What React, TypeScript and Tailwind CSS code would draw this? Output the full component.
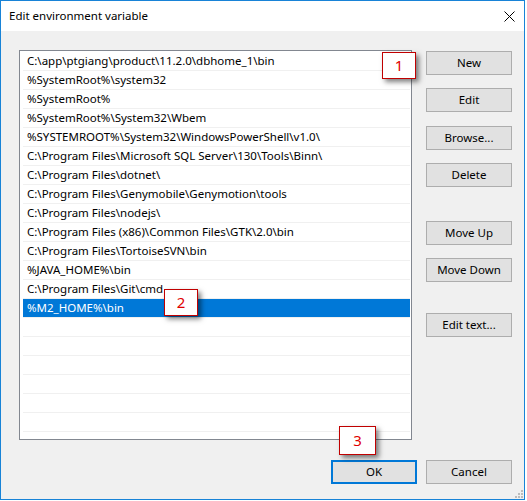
import React from "react";

const rows = [
  "C:\\app\\ptgiang\\product\\11.2.0\\dbhome_1\\bin",
  "%SystemRoot%\\system32",
  "%SystemRoot%",
  "%SystemRoot%\\System32\\Wbem",
  "%SYSTEMROOT%\\System32\\WindowsPowerShell\\v1.0\\",
  "C:\\Program Files\\Microsoft SQL Server\\130\\Tools\\Binn\\",
  "C:\\Program Files\\dotnet\\",
  "C:\\Program Files\\Genymobile\\Genymotion\\tools",
  "C:\\Program Files\\nodejs\\",
  "C:\\Program Files (x86)\\Common Files\\GTK\\2.0\\bin",
  "C:\\Program Files\\TortoiseSVN\\bin",
  "%JAVA_HOME%\\bin",
  "C:\\Program Files\\Git\\cmd",
  "%M2_HOME%\\bin",
  "",
  "",
  "",
  "",
  "",
  "",
  "",
];

function Btn({ label, className = "" }: { label: string; className?: string }) {
  return (
    <div
      className={`w-[86px] h-[24px] bg-[#e1e1e1] border border-[#adadad] flex items-center justify-center text-[11.5px] text-black ${className}`}
    >
      {label}
    </div>
  );
}

function Callout({ n, className }: { n: string; className: string }) {
  return (
    <div
      className={`absolute bg-white border border-[#c00000] flex items-center justify-center text-[15px] text-[#e00000] shadow-[3px_3px_5px_rgba(0,0,0,0.5)] ${className}`}
    >
      {n}
    </div>
  );
}

export default function App() {
  return (
    <div
      className="relative w-[527px] h-[501px] bg-white"
      style={{ fontFamily: '"Noto Sans", "Segoe UI", sans-serif' }}
    >
      <div className="w-[525px] h-[500px] border border-[#1883d7] flex flex-col">
        <div className="h-[30px] bg-white flex items-center justify-between pl-[8px] pr-[8px] shrink-0">
          <span className="text-[11.5px] text-black leading-none">Edit environment variable</span>
          <svg width="11" height="11" viewBox="0 0 11 11" className="mr-[1px]">
            <path d="M0.5 0.5 L10.5 10.5 M10.5 0.5 L0.5 10.5" stroke="#000" strokeWidth="1" />
          </svg>
        </div>
        <div className="relative flex-1 bg-[#f0f0f0] flex flex-col pl-[18px] pt-[19px]">
          <div className="flex">
            <div className="w-[393px] h-[390px] bg-white border border-[#828790] pt-[1px] overflow-hidden">
              {rows.map((r, i) => {
                const sel = i === 13;
                return (
                  <div
                    key={i}
                    className={`ml-[3px] mr-[1px] h-[19px] border-b border-[#f0f0f0] flex items-center pl-[4px] text-[11.5px] whitespace-nowrap leading-none ${
                      sel ? "bg-[#0078d7] text-white" : "text-black"
                    }`}
                  >
                    {r}
                  </div>
                );
              })}
            </div>
            <div className="ml-[14px] flex flex-col pt-[1px]">
              <Btn label="New" />
              <Btn label="Edit" className="mt-[13px]" />
              <Btn label="Browse..." className="mt-[14px]" />
              <Btn label="Delete" className="mt-[13px]" />
              <Btn label="Move Up" className="mt-[34px]" />
              <Btn label="Move Down" className="mt-[13px]" />
              <Btn label="Edit text..." className="mt-[31px]" />
            </div>
          </div>
          <div className="flex justify-end pr-[12px] mt-[20px] gap-[9px]">
            <div className="w-[86px] h-[24px] bg-[#e1e1e1] border-2 border-[#0078d7] flex items-center justify-center text-[11.5px] text-black">
              OK
            </div>
            <Btn label="Cancel" />
          </div>
          <svg width="8" height="8" viewBox="0 0 8 8" className="absolute right-[1px] bottom-[1px]">
            <rect x="6" y="0" width="2" height="2" fill="#bcbcbc" />
            <rect x="3" y="3" width="2" height="2" fill="#bcbcbc" />
            <rect x="6" y="3" width="2" height="2" fill="#bcbcbc" />
            <rect x="0" y="6" width="2" height="2" fill="#bcbcbc" />
            <rect x="3" y="6" width="2" height="2" fill="#bcbcbc" />
            <rect x="6" y="6" width="2" height="2" fill="#bcbcbc" />
          </svg>
        </div>
      </div>
      <Callout n="1" className="left-[382px] top-[52px] w-[34px] h-[27px]" />
      <Callout n="2" className="left-[164px] top-[289px] w-[34px] h-[27px]" />
      <Callout n="3" className="left-[339px] top-[426px] w-[37px] h-[29px]" />
    </div>
  );
}
